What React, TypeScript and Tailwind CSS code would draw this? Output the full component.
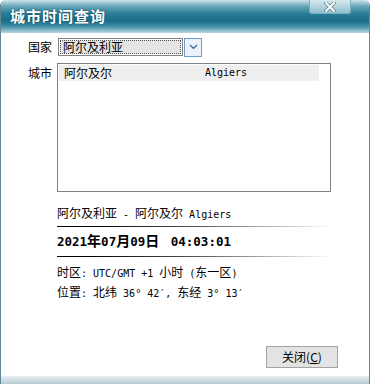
import React from 'react';

const FONT = "font-['Noto_Sans_CJK_SC','Noto_Sans',sans-serif]";
const MONO = "font-['DejaVu_Sans_Mono',monospace]";

// latin runs in the reference are half-width monospace
function L({ children }: { children: React.ReactNode }) {
  return <span className={`${MONO} whitespace-pre text-[10px]`}>{children}</span>;
}

function D({ children }: { children: React.ReactNode }) {
  return <span className={`${MONO} whitespace-pre text-[12.5px]`}>{children}</span>;
}

function CloseGlyph() {
  return (
    <svg width="12" height="10" viewBox="0 0 12 10">
      <path d="M2 1 L10 9 M10 1 L2 9" stroke="#5a7f8a" strokeWidth="3.4" strokeLinecap="square" />
      <path d="M2 1 L10 9 M10 1 L2 9" stroke="#ffffff" strokeWidth="2" strokeLinecap="square" />
    </svg>
  );
}

function Chevron() {
  return (
    <svg width="9" height="6" viewBox="0 0 9 6">
      <path d="M1 1 L4.5 4.5 L8 1" fill="none" stroke="#3b5f86" strokeWidth="1.2" />
    </svg>
  );
}

function Rule() {
  return <div className="h-px w-[275px] bg-gradient-to-r from-black via-[#555555] to-transparent" />;
}

export default function App() {
  return (
    <div className={`${FONT} flex h-[384px] w-[370px] flex-col overflow-hidden rounded-t-[6px] border-x border-[#5f8893] bg-white text-[12px] text-black`}>
      {/* title bar */}
      <div className="flex h-[33px] shrink-0 items-start justify-between bg-[linear-gradient(to_bottom,#cfe3ea_0%,#6fa9bb_18%,#2a7f99_40%,#1a6d87_62%,#3f8fa8_80%,#bcd8e1_100%)]">
        <span className="mt-[7px] ml-[9px] text-[15px] font-bold leading-[18px] tracking-[1px] text-white [text-shadow:0_0_2px_#0b3f50]">
          城市时间查询
        </span>
        <div className="mr-[18px] flex h-[14px] w-[42px] items-center justify-center rounded-b-[3px] border-x border-b border-[#7fb0c0] bg-gradient-to-b from-[#d6e8ee] to-[#8ec0cf]">
          <CloseGlyph />
        </div>
      </div>

      {/* body */}
      <div className="flex flex-1 flex-col pl-[27px]">
        <div className="mt-[5px] flex h-[18px] items-center">
          <span className="w-[30px] leading-[14px]">国家</span>
          <div className="flex h-[18px] w-[125px] items-center border border-[#828282] bg-white p-px">
            <div className="flex h-full w-full items-center border border-dotted border-[#555555] bg-[#e4e4e4] pl-[2px] leading-[14px]">
              阿尔及利亚
            </div>
          </div>
          <div className="ml-[1px] flex h-[19px] w-[18px] items-center justify-center border border-[#6f9ccc] bg-[#eaf3fb]">
            <Chevron />
          </div>
        </div>

        <div className="mt-[7px] flex">
          <span className="mt-[3px] w-[29px] leading-[14px]">城市</span>
          <div className="h-[129px] w-[274px] border border-[#828282] p-px">
            <div className="flex h-[16px] w-[260px] items-center bg-[#efefef] leading-[14px]">
              <span className="ml-[5px] w-[141px]">阿尔及尔</span>
              <L>Algiers</L>
            </div>
          </div>
        </div>

        <div className="ml-[29px] flex flex-col">
          <div className="mt-[14px] leading-[14px]">
            阿尔及利亚<L> - </L>阿尔及尔<L> Algiers</L>
          </div>
          <div className="mt-[4px]"><Rule /></div>
          <div className="mt-[6px] flex items-baseline text-[14px] font-bold leading-[14px]">
            <D>2021</D>年<D>07</D>月<D>09</D>日<D> </D><span className="ml-[4px]"><D>04:03:01</D></span>
          </div>
          <div className="mt-[7px]"><Rule /></div>
          <div className="mt-[8px] leading-[14px]">
            时区<L>: UTC/GMT +1 </L>小时<L> (</L>东一区<L>)</L>
          </div>
          <div className="mt-[4px] leading-[14px]">
            位置<L>: </L>北纬<L> 36° 42′, </L>东经<L> 3° 13′</L>
          </div>
        </div>

        <div className="mt-auto mb-[8px] mr-[31px] flex justify-end">
          <button className="flex h-[22px] w-[72px] items-center justify-center border border-[#a3a3a3] bg-[#e3e3e3] leading-[14px]">
            关闭(<span className="underline">C</span>)
          </button>
        </div>
      </div>

      {/* bottom edge */}
      <div className="h-[8px] shrink-0 bg-gradient-to-b from-[#e8eff2] to-[#b8cbd2]" />
    </div>
  );
}
